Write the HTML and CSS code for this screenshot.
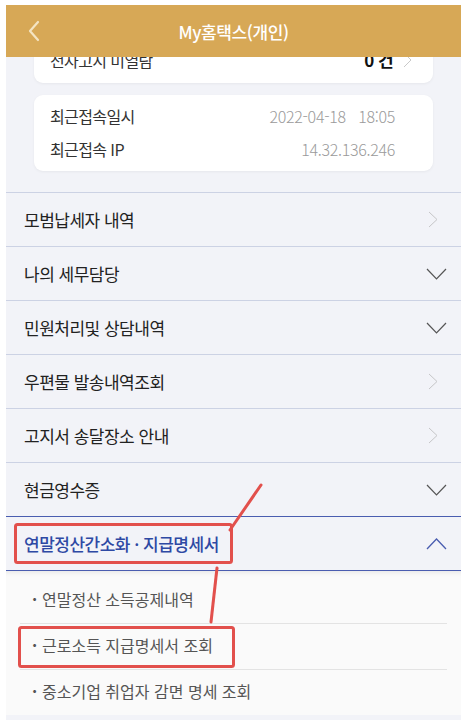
FILE: index.html
```html
<!DOCTYPE html>
<html lang="ko">
<head>
<meta charset="utf-8">
<title>My홈택스(개인)</title>
<link rel="stylesheet" href="styles.css">
</head>
<body>
<div class="frame">
  <header class="topbar">
    <svg class="back" width="14" height="22" viewBox="0 0 14 22"><path d="M11 2 L3 11 L11 20" fill="none" stroke="#F4E4C2" stroke-width="2.2" stroke-linecap="round" stroke-linejoin="round"/></svg>
    <h1 class="title">My홈택스(개인)</h1>
  </header>

  <div class="content">
    <div class="card card-notice">
      <div class="card-row">
        <span class="label">전자고지 미열람</span>
        <span class="count">0 건</span>
        <svg class="card-chev" width="9" height="16" viewBox="0 0 9 16"><path d="M1 1 L8 8 L1 15" fill="none" stroke="#C9C9C9" stroke-width="1"/></svg>
      </div>
    </div>
    <div class="card card-info">
      <div class="card-row"><span class="label">최근접속일시</span><span class="value">2022-04-18&nbsp;&nbsp;&nbsp;18:05</span></div>
      <div class="card-row"><span class="label">최근접속 IP</span><span class="value">14.32.136.246</span></div>
    </div>

    <ul class="menu">
      <li class="menu-item"><span>모범납세자 내역</span><svg class="chev-right" width="10" height="17" viewBox="0 0 10 17"><path d="M1 1 L9 8.5 L1 16" fill="none" stroke="#C6C6C8" stroke-width="1"/></svg></li>
      <li class="menu-item"><span>나의 세무담당</span><svg class="chev-down" width="21" height="12" viewBox="0 0 21 12"><path d="M1 1 L10.5 11 L20 1" fill="none" stroke="#555" stroke-width="1.2"/></svg></li>
      <li class="menu-item"><span>민원처리및 상담내역</span><svg class="chev-down" width="21" height="12" viewBox="0 0 21 12"><path d="M1 1 L10.5 11 L20 1" fill="none" stroke="#555" stroke-width="1.2"/></svg></li>
      <li class="menu-item"><span>우편물 발송내역조회</span><svg class="chev-right" width="10" height="17" viewBox="0 0 10 17"><path d="M1 1 L9 8.5 L1 16" fill="none" stroke="#C6C6C8" stroke-width="1"/></svg></li>
      <li class="menu-item"><span>고지서 송달장소 안내</span><svg class="chev-right" width="10" height="17" viewBox="0 0 10 17"><path d="M1 1 L9 8.5 L1 16" fill="none" stroke="#C6C6C8" stroke-width="1"/></svg></li>
      <li class="menu-item before-open"><span>현금영수증</span><svg class="chev-down" width="21" height="12" viewBox="0 0 21 12"><path d="M1 1 L10.5 11 L20 1" fill="none" stroke="#555" stroke-width="1.2"/></svg></li>
      <li class="menu-item open"><span>연말정산간소화 · 지급명세서</span><svg class="chev-up" width="21" height="12" viewBox="0 0 21 12"><path d="M1 11 L10.5 1 L20 11" fill="none" stroke="#4A5DB0" stroke-width="1.3"/></svg></li>
    </ul>

    <ul class="submenu">
      <li class="sub-item">연말정산 소득공제내역</li>
      <li class="sub-item">근로소득 지급명세서 조회</li>
      <li class="sub-item">중소기업 취업자 감면 명세 조회</li>
    </ul>
  </div>

  <svg class="annot" width="455" height="715" viewBox="0 0 455 715">
    <g fill="none" stroke="#E2504C" stroke-width="3" stroke-linecap="round">
      <rect x="9.5" y="519.5" width="216" height="38" rx="2"/>
      <rect x="13.5" y="622.5" width="214" height="39" rx="2"/>
      <path d="M255 480 L224 525"/>
      <path d="M211 563 L205 617"/>
    </g>
  </svg>
</div>
</body>
</html>
```

FILE: styles.css
```css
* { box-sizing: border-box; }
html, body { margin: 0; padding: 0; background: #fff; }
body {
  font-family: "Noto Sans CJK KR", "Noto Sans", sans-serif;
  color: #222;
}
.frame {
  position: relative;
  margin: 5px 0 0 6px;
  width: 455px;
  height: 715px;
  background: #F2F3F8;
  overflow: hidden;
}
.topbar {
  position: relative;
  z-index: 2;
  height: 52px;
  background: #D7A856;
  display: flex;
  align-items: center;
  justify-content: center;
}
.back {
  position: absolute;
  left: 21px;
  top: 15px;
}
.title {
  margin: 0;
  font-size: 17px;
  font-weight: 500;
  color: #fff;
  letter-spacing: -0.4px;
}
.content {
  margin-top: -15px;
  display: flex;
  flex-direction: column;
}
.card {
  margin: 0 28px;
  background: #fff;
  border-radius: 9px;
  box-shadow: 0 1px 3px rgba(0,0,0,0.05);
}
.card-notice {
  padding: 1px 21px 7px 16px;
}
.card-info {
  margin-top: 12px;
  padding: 4px 38px 6px 16px;
}
.card-row {
  height: 33px;
  display: flex;
  align-items: center;
  font-size: 16px;
  letter-spacing: -0.6px;
}
.card-row .label { flex: 1; color: #333; }
.card-row .value { color: #9A9A9A; letter-spacing: -0.3px; font-weight: 300; }
.card-row .count { font-weight: 700; color: #111; margin-right: 10px; font-size: 17px; }
.card-chev { display: block; }
.menu {
  list-style: none;
  margin: 21px 0 0;
  padding: 0;
  border-top: 1px solid #CCD2E4;
}
.menu-item {
  height: 54px;
  border-bottom: 1px solid #CCD2E4;
  display: flex;
  align-items: center;
  justify-content: space-between;
  padding: 0 14px 0 18px;
  font-size: 17px;
  letter-spacing: -0.5px;
  color: #222;
}
.menu-item .chev-right { margin-right: 9px; }
.menu-item.before-open { border-bottom-color: #4A5DB0; }
.menu-item.open {
  color: #2E49A4;
  font-weight: 500;
  border-bottom-color: #4A5DB0;
}
.submenu {
  list-style: none;
  margin: 0;
  padding: 7px 14px 0 14px;
  background: #FAFAFA;
  box-shadow: inset 0 6px 6px -6px rgba(0,0,0,0.12);
  flex: 1;
  height: 160px;
}
.sub-item {
  padding: 8px 0 11px 12px;
  line-height: 26px;
  font-size: 16px;
  letter-spacing: 0;
  color: #555;
  border-bottom: 1px solid #E3E3E3;
}
.sub-item::before {
  content: "·";
  display: inline-block;
  width: 10px;
  font-weight: 700;
}
.sub-item:last-child { border-bottom: none; }
.annot {
  position: absolute;
  left: 0;
  top: 0;
  z-index: 3;
  pointer-events: none;
}
```
